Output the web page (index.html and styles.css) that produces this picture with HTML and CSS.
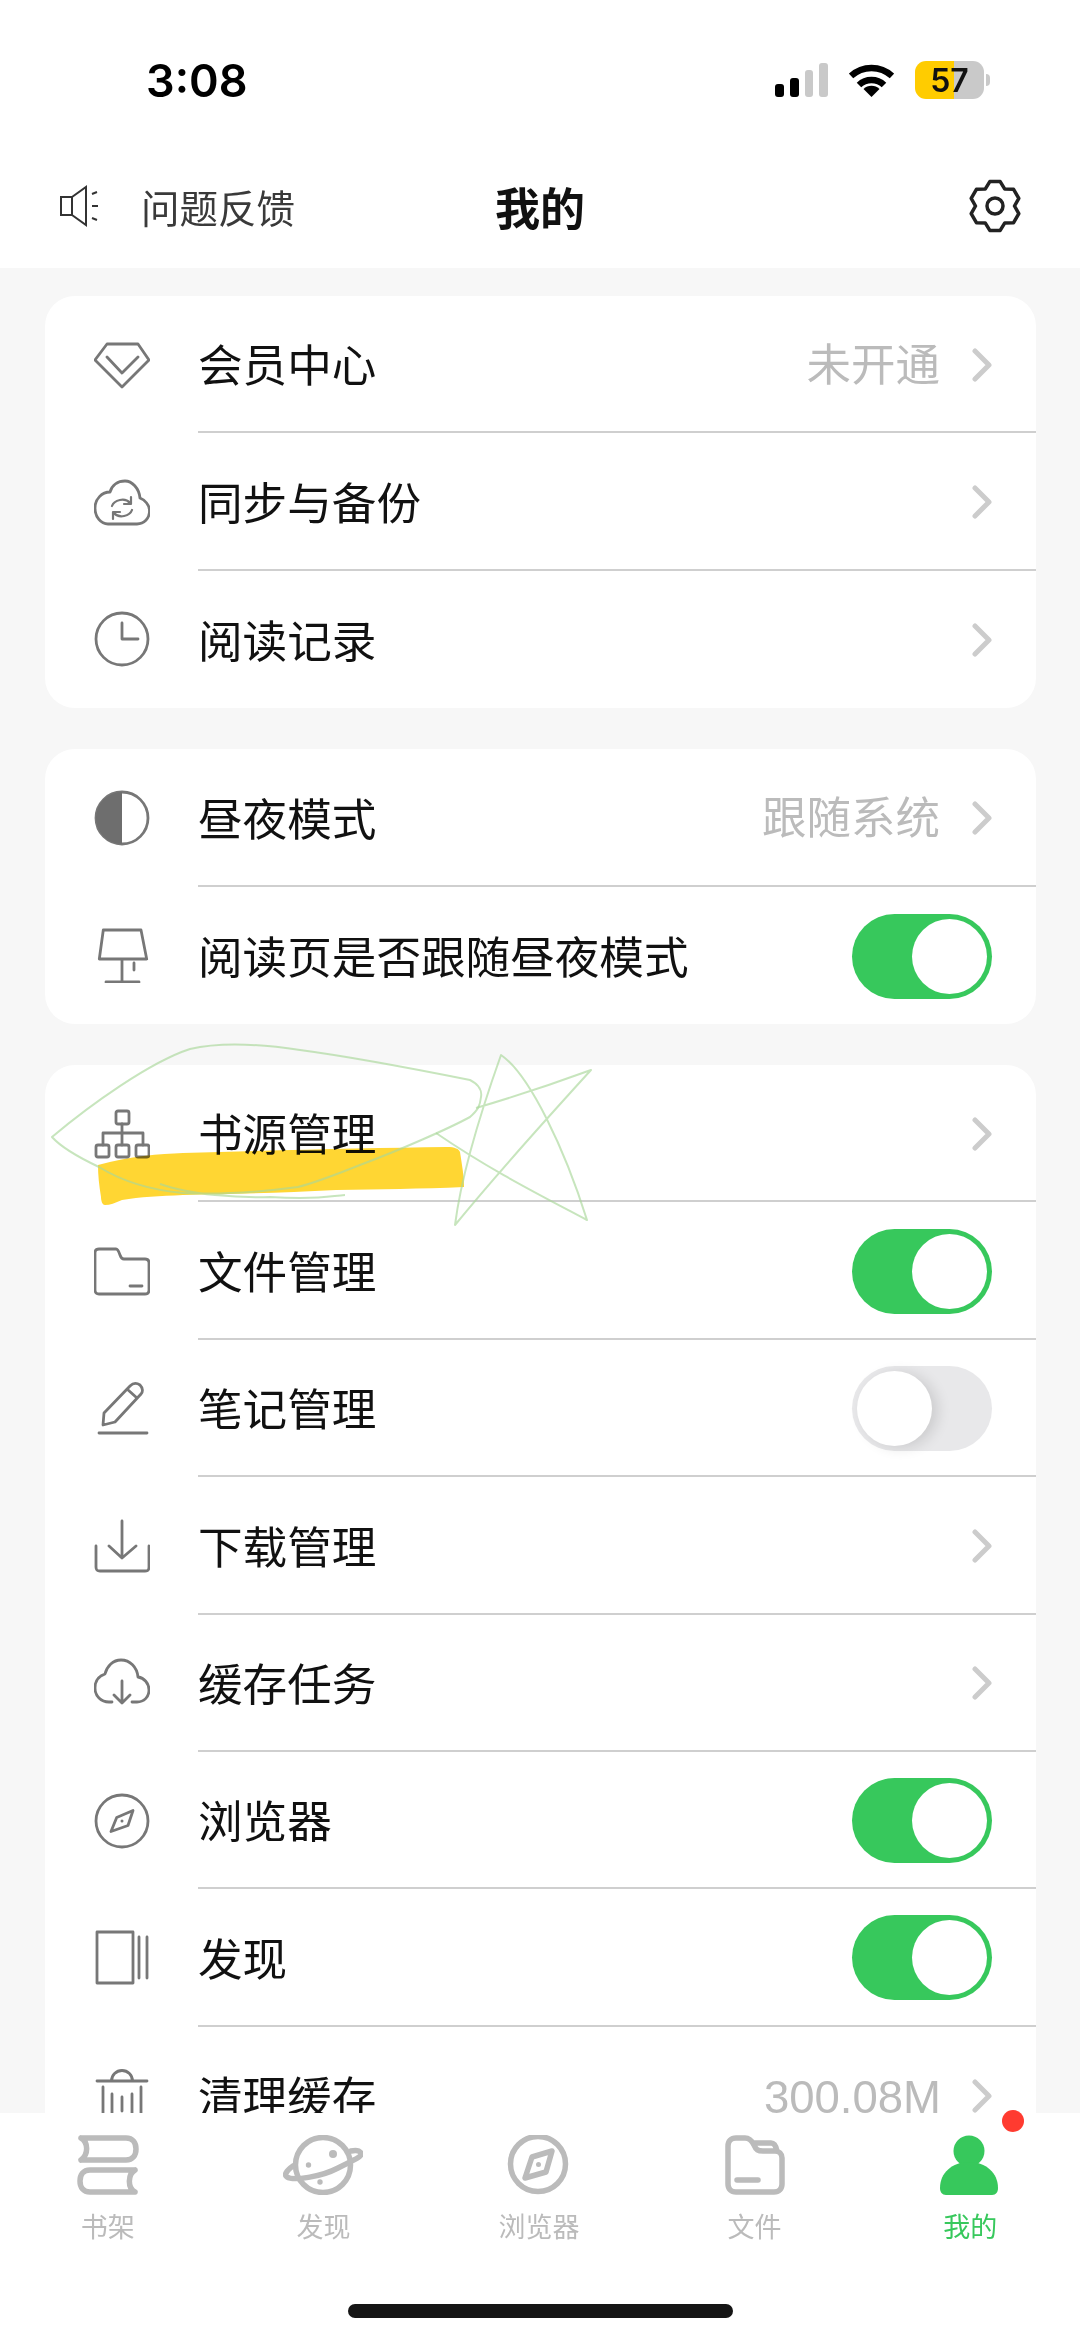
FILE: index.html
```html
<!DOCTYPE html>
<html lang="zh-CN">
<head>
<meta charset="utf-8">
<title>我的</title>
<link rel="stylesheet" href="styles.css">
</head>
<body>
<div class="page">
  <header class="head">
    <div class="status">
      <span class="time">3:08</span>
      <div class="status-right">
        <div class="signal"><i class="b1"></i><i class="b2"></i><i class="b3"></i><i class="b4"></i></div>
        <svg class="wifi" viewBox="0 0 45 34"><path class="wifi-arc" d="M2 13A30 30 0 0 1 43 13"/><path class="wifi-arc" d="M10 22A18 18 0 0 1 35 22"/><path class="wifi-dot" d="M22.500 34L14.500 26A11.500 11.500 0 0 1 30.500 26Z"/></svg>
        <div class="battery"><span>57</span></div>
        <i class="nub"></i>
      </div>
    </div>
    <nav class="nav">
      <div class="nav-left">
        <svg class="speaker" viewBox="0 0 44 44"><path d="M5 13H16V31H5ZM16 13L30 3V41L16 31M36 10L41 8M36 22H42M36 34L41 36"/></svg>
        <span class="feedback">问题反馈</span>
      </div>
      <h1 class="title">我的</h1>
      <div class="nav-right">
        <svg class="gear" viewBox="0 0 56 56"><path d="M22.800 3.600H33.200L37.800 11.100L46.600 11.300L51.800 20.300L47.500 28L51.800 35.700L46.600 44.700L37.800 44.900L33.200 52.400H22.800L18.200 44.900L9.400 44.700L4.200 35.700L8.500 28L4.200 20.300L9.400 11.300L18.200 11.100Z"/><circle cx="28" cy="28" r="8"/></svg>
      </div>
    </nav>
  </header>

  <main class="scroll">
    <section class="card">
      <div class="row">
        <svg class="ico" viewBox="0 0 56 56"><path d="M13 7H44L55 23L28 50L1 23ZM13 20L28 36L44 20"/></svg>
        <div class="main"><span class="label">会员中心</span><span class="value">未开通</span><svg class="chev" viewBox="0 0 20 34"><path d="M3 3L17 17L3 31"/></svg></div>
      </div>
      <div class="row">
        <svg class="ico" viewBox="0 0 56 56"><path d="M14 50H43C50 50 55.500 44.500 55.500 37C55.500 31 51 26 46 24C45 14 38 7 31 7C24 7 18 11 16 18C8 18 1 25 1 34C1 43 7 50 14 50Z"/><path class="thin" d="M18 32C20 26 31 23 36 29M38 36C36 42 25 45 20 39M37 23V30H30M19 45V38H26"/></svg>
        <div class="main"><span class="label">同步与备份</span><svg class="chev" viewBox="0 0 20 34"><path d="M3 3L17 17L3 31"/></svg></div>
      </div>
      <div class="row">
        <svg class="ico" viewBox="0 0 56 56"><circle cx="28" cy="28" r="26"/><path d="M28 12V28H44"/></svg>
        <div class="main last"><span class="label">阅读记录</span><svg class="chev" viewBox="0 0 20 34"><path d="M3 3L17 17L3 31"/></svg></div>
      </div>
    </section>

    <section class="card">
      <div class="row">
        <svg class="ico" viewBox="0 0 56 56"><circle cx="28" cy="28" r="26"/><path class="fill" d="M28 2A26 26 0 0 0 28 54Z"/></svg>
        <div class="main"><span class="label">昼夜模式</span><span class="value">跟随系统</span><svg class="chev" viewBox="0 0 20 34"><path d="M3 3L17 17L3 31"/></svg></div>
      </div>
      <div class="row">
        <svg class="ico" viewBox="0 0 56 56"><path d="M9.300 3H47L52.700 32H5.300ZM28 32V55M12 55H45M40 36V43"/></svg>
        <div class="main last"><span class="label">阅读页是否跟随昼夜模式</span><span class="toggle on"><i></i></span></div>
      </div>
    </section>

    <section class="card">
      <div class="row">
        <svg class="ico" viewBox="0 0 56 56"><rect x="22" y="5" width="13" height="13" rx="2"/><rect x="2" y="39" width="13" height="12" rx="2"/><rect x="22" y="39" width="13" height="12" rx="2"/><rect x="42" y="39" width="13" height="12" rx="2"/><path d="M28 18V27M9 39V27H49V39M28 27V39"/></svg>
        <div class="main"><span class="label">书源管理</span><svg class="chev" viewBox="0 0 20 34"><path d="M3 3L17 17L3 31"/></svg></div>
      </div>
      <div class="row">
        <svg class="ico" viewBox="0 0 56 56"><path d="M1 10C1 7.500 2.500 6 5 6H22C24 6 25 9 26 12C27 15 28 16 30 16H51C53.500 16 55 17.500 55 20V47C55 49.500 53.500 51 51 51H5C2.500 51 1 49.500 1 47ZM36 43H48"/></svg>
        <div class="main"><span class="label">文件管理</span><span class="toggle on"><i></i></span></div>
      </div>
      <div class="row">
        <svg class="ico" viewBox="0 0 56 56"><path d="M5 53H53M9 45L10 33L36 6C39 3 43 3 46 5C49 8 49 12 47 14L21 42ZM33 9L43 18"/></svg>
        <div class="main"><span class="label">笔记管理</span><span class="toggle"><i></i></span></div>
      </div>
      <div class="row">
        <svg class="ico" viewBox="0 0 56 56"><path d="M28 3V40M15 28L28 40L42 28M2 28V49C2 52 3 53 6 53H51C54 53 55 52 55 49V28"/></svg>
        <div class="main"><span class="label">下载管理</span><svg class="chev" viewBox="0 0 20 34"><path d="M3 3L17 17L3 31"/></svg></div>
      </div>
      <div class="row">
        <svg class="ico" viewBox="0 0 56 56"><path d="M18 47H15C7 47 1 41 1 33C1 26 5 21 11 19C13 11 19 5 27 5C36 5 43 12 44 22C50 23 55 28 55 35C55 42 50 47 43 47H38M28 26V48M20 40L28 48L36 40"/></svg>
        <div class="main"><span class="label">缓存任务</span><svg class="chev" viewBox="0 0 20 34"><path d="M3 3L17 17L3 31"/></svg></div>
      </div>
      <div class="row">
        <svg class="ico" viewBox="0 0 56 56"><circle cx="28" cy="28" r="26"/><path d="M39 17.500L34 32.500L17 38.500L22.700 24.500Z"/><circle class="dot" cx="28" cy="28" r="1.500"/></svg>
        <div class="main"><span class="label">浏览器</span><span class="toggle on"><i></i></span></div>
      </div>
      <div class="row">
        <svg class="ico" viewBox="0 0 56 56"><path d="M3 2H39V53H3ZM45 7V48M53 7V48"/></svg>
        <div class="main"><span class="label">发现</span><span class="toggle on"><i></i></span></div>
      </div>
      <div class="row">
        <svg class="ico" viewBox="0 0 56 56"><path d="M3 14H53M17.500 14A10.500 10.500 0 0 1 38.500 14M9 20V48M18 27V48M28 30V44M38 27V48M47 20V48"/></svg>
        <div class="main last"><span class="label">清理缓存</span><span class="value num">300.08M</span><svg class="chev" viewBox="0 0 20 34"><path d="M3 3L17 17L3 31"/></svg></div>
      </div>
    </section>
  </main>

  <footer class="tabbar">
    <div class="tabs">
      <div class="tab">
        <svg class="tab-ico" viewBox="0 0 80 60"><path d="M13 3H58C65 3 68 8 68 14C68 20 65 25 58 25H13M13 3C20 7 21 19 13 25M67 35H22C15 35 12 40 12 46C12 52 15 57 22 57H67M67 35C60 39 59 53 67 57"/></svg>
        <span class="tab-label">书架</span>
      </div>
      <div class="tab">
        <svg class="tab-ico" viewBox="0 0 80 60"><circle cx="40" cy="30" r="27.500"/><path class="ring" d="M10 31C3 36 1 40 4 42C10 46 38 42 55 33C68 26 80 22 78 18C76 15 72 15 68 16"/><circle class="pt" cx="50" cy="19" r="4"/><circle class="pt" cx="25.500" cy="30" r="2.700"/><circle class="pt" cx="37" cy="47" r="2.700"/></svg>
        <span class="tab-label">发现</span>
      </div>
      <div class="tab">
        <svg class="tab-ico" viewBox="0 0 80 60"><circle cx="39" cy="29" r="27.500"/><path d="M53 16L47 37L26 43L33 22Z"/><circle class="pt" cx="39.500" cy="29.500" r="2.500"/></svg>
        <span class="tab-label">浏览器</span>
      </div>
      <div class="tab">
        <svg class="tab-ico" viewBox="0 0 80 60"><path d="M13 11C13 6 16 3 21 3H30C35 3 37 6 39 10C41 15 43 16 48 16H60C64 16 67 19 67 23V49C67 54 64 57 59 57H21C16 57 13 54 13 49ZM38 8H56C59 8 61 11 62 16M22 45H43"/></svg>
        <span class="tab-label">文件</span>
      </div>
      <div class="tab active">
        <svg class="tab-ico" viewBox="0 0 80 60"><circle class="solid" cx="39" cy="16" r="15.500"/><path class="solid" d="M10 53C10 38 22 27 39 27C56 27 68 38 68 53C68 57 66 60 62 60H16C12 60 10 57 10 53Z"/></svg>
        <span class="tab-label">我的</span>
        <i class="badge"></i>
      </div>
    </div>
    <div class="home"></div>
  </footer>

  <svg class="scribble" viewBox="0 0 1080 2341">
    <path class="marker" d="M98 1165C130 1156 160 1154 183 1153C280 1150 370 1148 447 1147C455 1147 459 1149 460 1152C462 1165 464 1176 464 1187C420 1189 380 1189 336 1190C280 1193 230 1194 183 1195C160 1196 140 1197 122 1200C115 1203 110 1205 105 1205C102 1205 101 1200 101 1197C99 1185 98 1175 98 1165Z"/>
    <path class="pen" d="M52 1137C90 1105 150 1062 190 1049C220 1042 260 1044 300 1050C360 1058 420 1070 470 1080C480 1085 482 1092 481 1097C480 1106 478 1110 470 1117C450 1128 400 1150 360 1165C330 1177 310 1184 298 1187C260 1192 220 1195 183 1193C150 1190 120 1180 99 1167C80 1158 60 1146 52 1137ZM160 1184C190 1195 240 1198 270 1197C320 1200 330 1196 345 1195"/>
    <path class="pen" d="M436 1133C490 1170 540 1195 587 1220C565 1150 530 1075 501 1055C485 1100 462 1170 455 1225C500 1170 550 1115 591 1070C550 1085 510 1098 476 1108"/>
  </svg>
</div>
</body>
</html>
```
FILE: styles.css
```css
* { box-sizing: border-box; margin: 0; padding: 0; }
html, body { width: 1080px; height: 2341px; overflow: hidden; }
body { background: #f7f7f7; font-family: "Noto Sans CJK SC", "Noto Sans", sans-serif; color: #111; }

.page { position: relative; width: 1080px; height: 2341px; display: flex; flex-direction: column; overflow: hidden; }

.head { background: #fff; height: 268px; flex: none; }
.status { height: 160px; padding: 0 90px 0 146px; display: flex; align-items: center; justify-content: space-between; }
.time { font-family: "Inter", "Liberation Sans", sans-serif; font-weight: 600; font-size: 45px; color: #000; line-height: 1; }
.status-right { display: flex; align-items: center; }
.signal { display: flex; align-items: flex-end; gap: 6px; width: 53px; height: 34px; margin-right: 21px; }
.signal i { display: block; width: 9px; border-radius: 3px; background: #000; }
.signal .b1 { height: 13px; }
.signal .b2 { height: 19px; }
.signal .b3 { height: 27px; background: #c9c9c9; }
.signal .b4 { height: 34px; background: #c9c9c9; }
.wifi { width: 45px; height: 34px; margin-right: 21px; }
.wifi-arc { fill: none; stroke: #000; stroke-width: 6.500; }
.wifi-dot { fill: #000; }
.battery { width: 69px; height: 38px; border-radius: 11px; background: linear-gradient(90deg, #ffcc00 57%, #c9c9c9 57%); display: flex; align-items: center; justify-content: center; font-family: "Inter", "Liberation Sans", sans-serif; font-weight: 600; font-size: 32px; color: #111; }
.nub { display: block; width: 4px; height: 12px; margin-left: 2px; background: #c9c9c9; border-radius: 0 4px 4px 0; }

.nav { height: 108px; padding: 0 56px 16px 56px; display: grid; grid-template-columns: 1fr auto 1fr; align-items: center; }
.nav-left { display: flex; align-items: center; gap: 41px; }
.speaker { width: 44px; height: 44px; fill: none; stroke: #333; stroke-width: 2; }
.feedback { font-size: 38.500px; color: #3a3a3a; line-height: 1; }
.title { font-size: 45px; font-weight: 700; color: #111; line-height: 1; }
.nav-right { display: flex; justify-content: flex-end; }
.gear { width: 56px; height: 56px; margin-right: 1px; fill: none; stroke: #222; stroke-width: 3.500; stroke-linejoin: round; }

.scroll { flex: 1; min-height: 0; overflow: hidden; padding: 28px 44px 0 45px; display: flex; flex-direction: column; gap: 41px; }
.card { flex: none; background: #fff; border-radius: 30px; overflow: hidden; }
.row { height: 137.400px; display: flex; align-items: center; padding-left: 49px; gap: 48px; }
.ico { flex: none; width: 56px; height: 56px; fill: none; stroke: #777; stroke-width: 2.800; stroke-linejoin: round; stroke-linecap: round; }
.ico .thin { stroke-width: 2.200; }
.ico .fill { fill: #6e6e6e; stroke: none; }
.ico .dot { fill: #777; stroke: none; }
.main { flex: 1; align-self: stretch; min-width: 0; display: flex; align-items: center; border-bottom: 2px solid #cfcfcf; padding-right: 44px; }
.main.last { border-bottom: 0; }
.label { flex: 1; font-size: 44.600px; line-height: 1; color: #111; }
.value { font-size: 44.500px; line-height: 1; color: #bbb; margin: 5px 32px 0 0; font-family: "Liberation Sans", "Noto Sans CJK SC", sans-serif; }
.value.num { font-size: 45.500px; margin-right: 31px; }
.chev { flex: none; width: 20px; height: 34px; margin-top: 2px; fill: none; stroke: #ccc; stroke-width: 5; stroke-linecap: round; stroke-linejoin: round; }

.toggle { flex: none; position: relative; width: 140px; height: 85px; margin-top: 2px; border-radius: 43px; background: #e8e8ea; }
.toggle i { position: absolute; top: 5px; left: 5px; width: 75px; height: 75px; border-radius: 50%; background: #fff; box-shadow: 6px 2px 14px rgba(0,0,0,.12); }
.toggle.on { background: #37c85c; }
.toggle.on i { left: 60px; box-shadow: none; }

.tabbar { flex: none; height: 228px; background: #fff; }
.tabs { display: flex; padding: 22px 2px 0 0; }
.tab { position: relative; flex: 1; display: flex; flex-direction: column; align-items: center; }
.tab-ico { width: 80px; height: 60px; fill: none; stroke: #bbb; stroke-width: 5.500; stroke-linecap: round; stroke-linejoin: round; }
.tab-ico .pt { fill: #bbb; stroke: none; }
.tab-ico .solid { fill: #37c85c; stroke: none; }
.tab-label { margin-top: 13px; font-size: 27px; line-height: 36px; color: #bbb; }
.tab.active .tab-label { color: #37c85c; }
.badge { position: absolute; top: -25px; left: 140px; width: 22px; height: 22px; border-radius: 50%; background: #ff3b30; }
.home { width: 385px; height: 14px; margin: 60px auto 0; border-radius: 7px; background: #151515; }

.scribble { position: absolute; top: 0; left: 0; width: 1080px; height: 2341px; pointer-events: none; }
.marker { fill: #ffd633; mix-blend-mode: multiply; }
.pen { fill: none; stroke: #a9d79a; stroke-width: 2; stroke-linejoin: round; opacity: .65; }
```
